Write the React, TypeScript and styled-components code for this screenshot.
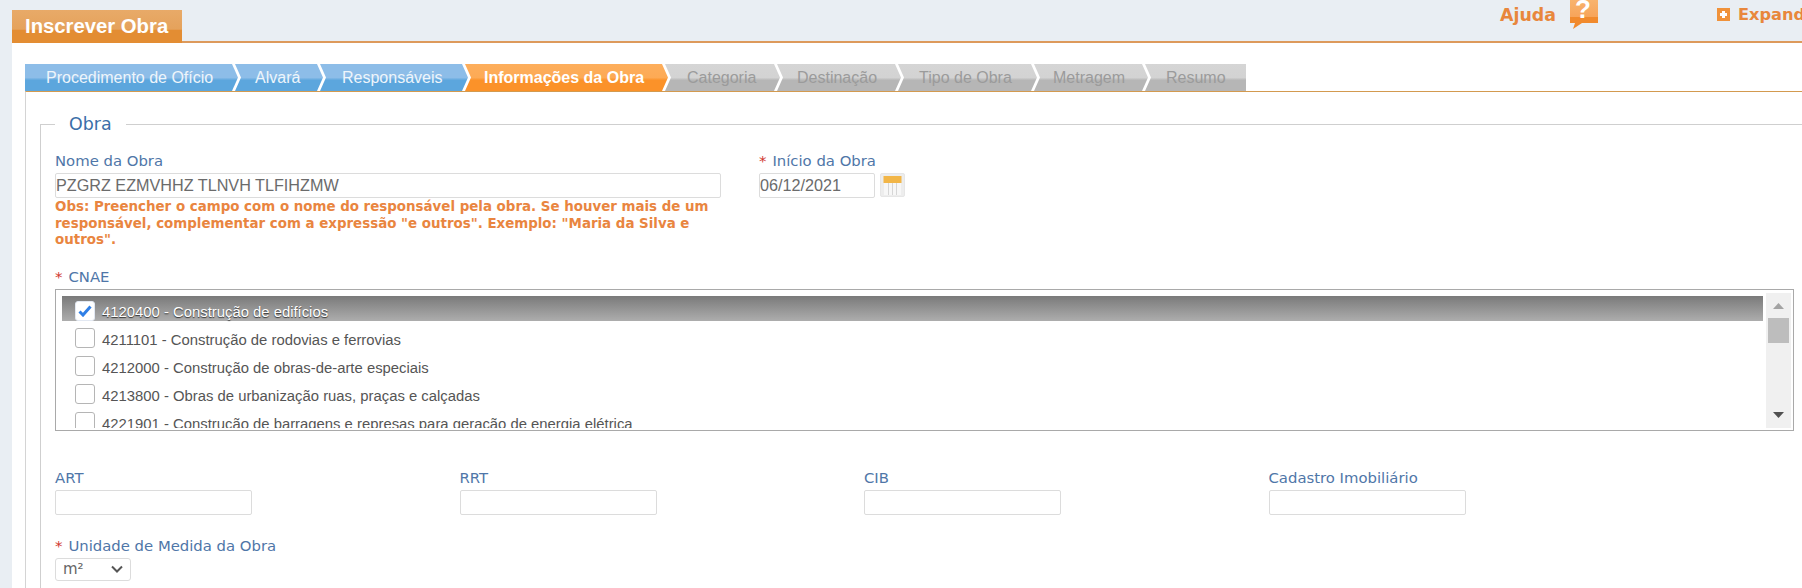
import React from 'react';
import styled, { createGlobalStyle } from 'styled-components';

const Global = createGlobalStyle`
  html, body { margin: 0; padding: 0; background: #e9eef3; }
  #root { width: 1802px; height: 588px; overflow: hidden; }
  * { box-sizing: border-box; }
`;

const Page = styled.div`
  width: 1802px;
  height: 588px;
  padding-left: 12px;
  overflow: hidden;
`;

const Header = styled.header`
  display: flex;
  align-items: flex-start;
  height: 43px;
  border-bottom: 2px solid #dd9a5c;
  white-space: nowrap;
`;

const TitleTab = styled.h1`
  flex: none;
  margin: 10px 0 -2px;
  width: 170px;
  height: 33px;
  padding: 4px 0 0 13px;
  font: bold 20.3px/24px "Liberation Sans", Arial, sans-serif;
  color: #fff;
  background: linear-gradient(#e8aa68 0%, #e5a25c 58%, #e38d33 62%, #e38d33 100%);
`;

const HelpLink = styled.a`
  flex: none;
  margin-left: 1318px;
  display: flex;
  align-items: flex-start;
  font: bold 17.4px/30px "DejaVu Sans", Verdana, sans-serif;
  color: #e8873c;
`;

const HelpIcon = styled.svg`
  margin-left: 14px;
  flex: none;
`;

const ExpandLink = styled.a`
  flex: none;
  margin-left: 119px;
  display: flex;
  align-items: flex-start;
  gap: 8px;
  font: bold 16.2px/30px "DejaVu Sans", Verdana, sans-serif;
  color: #e8873c;
`;

const ExpandIcon = styled.svg`
  margin-top: 8px;
  flex: none;
`;

const Main = styled.main`
  background: #fff;
  height: 545px;
  padding: 21px 0 0 13px;
  overflow: hidden;
`;

const Steps = styled.nav`
  display: flex;
  height: 27px;
`;

type Tone = 'done' | 'active' | 'off';

const toneBg: Record<Tone, string> = {
  done: 'linear-gradient(#8dbde8 0%, #8dbde8 50%, #5ca6dd 60%, #5ca6dd 100%)',
  active: 'linear-gradient(#fdae5c 0%, #fdaa55 50%, #fb9229 60%, #fb9229 100%)',
  off: 'linear-gradient(#d5d5d5 0%, #d3d3d3 50%, #b6b6b6 60%, #b6b6b6 100%)',
};

const toneText: Record<Tone, string> = { done: '#eef5fb', active: '#fff', off: '#9b9b9b' };

const Step = styled.div<{ $tone: Tone; $w: number; $pad: number; $first?: boolean; $last?: boolean }>`
  flex: none;
  width: ${p => p.$w}px;
  margin-right: ${p => (p.$last ? 0 : -3)}px;
  padding-left: ${p => p.$pad}px;
  background: ${p => toneBg[p.$tone]};
  color: ${p => toneText[p.$tone]};
  font: ${p => (p.$tone === 'active' ? 'bold' : 'normal')} 16px/27px "Liberation Sans", Arial, sans-serif;
  white-space: nowrap;
  clip-path: polygon(
    0 0,
    ${p => (p.$last ? '100% 0, 100% 100%' : 'calc(100% - 6px) 0, 100% 50%, calc(100% - 6px) 100%')},
    0 100%
    ${p => (p.$first ? '' : ', 6px 50%')}
  );
`;

const Panel = styled.section`
  border-top: 1px solid #d39a4f;
  border-left: 1px solid #d4d4d4;
  height: 497px;
  padding: 20px 0 0 14px;
`;

const Fieldset = styled.fieldset`
  margin: 0;
  width: 1800px;
  height: 480px;
  padding: 0 0 0 14px;
  border: none;
  border-top: 1px solid #cfcfcf;
  border-left: 1px solid #cfcfcf;
  min-width: 0;
`;

const Legend = styled.legend`
  padding: 0 14px;
  font: 17.4px/24px "DejaVu Sans", Verdana, sans-serif;
  color: #3b6ea8;
`;

const TopRow = styled.div`
  display: grid;
  grid-template-columns: 666px 200px;
  column-gap: 38px;
  margin-top: 15px;
`;

const Field = styled.div`
  display: flex;
  flex-direction: column;
  align-items: flex-start;
`;

const Label = styled.label`
  font: 14.85px/20px "DejaVu Sans", Verdana, sans-serif;
  color: #4f76a8;
  margin-bottom: 2px;
  white-space: nowrap;
`;

const Star = styled.span`
  color: #d0342c;
  margin-right: 6px;
`;

const TextInput = styled.input<{ $w: number }>`
  width: ${p => p.$w}px;
  height: 25px;
  padding: 0;
  border: 1px solid #dcdcdc;
  border-radius: 2px;
  background: #fff;
  color: #6b6b6b;
  font: 16.2px "Liberation Sans", Arial, sans-serif;
  outline: none;
`;

const Note = styled.p`
  margin: 1px 0 0;
  font: bold 13.4px/16.5px "DejaVu Sans", Verdana, sans-serif;
  color: #e98540;
`;

const DateLine = styled.div`
  display: flex;
  gap: 5px;
`;

const CalendarButton = styled.button`
  width: 25px;
  height: 24px;
  padding: 0;
  border: 1px solid #e6e6e6;
  border-radius: 2px;
  background: #ededed;
  display: flex;
  align-items: center;
  justify-content: center;
`;

const CnaeField = styled(Field)`
  margin-top: 18px;
`;

const ListBox = styled.div`
  display: flex;
  width: 1739px;
  height: 142px;
  padding: 3px 2px 2px 6px;
  border: 1px solid #a9a9a9;
`;

const Rows = styled.div`
  flex: 1;
  min-width: 0;
  margin: 3px 3px 0 0;
  overflow: hidden;
`;

const Row = styled.div<{ $on?: boolean }>`
  display: flex;
  align-items: flex-start;
  gap: 7px;
  height: 25px;
  margin-bottom: 3px;
  padding: 4px 0 0 13px;
  background: ${p => (p.$on ? 'linear-gradient(#7a7a7a, #adadad)' : 'transparent')};
  color: ${p => (p.$on ? '#fff' : '#555')};
  text-shadow: ${p => (p.$on ? '0 1px 1px #333' : 'none')};
  font: 14.85px/24px "Liberation Sans", Arial, sans-serif;
  white-space: nowrap;
`;

const Check = styled.span<{ $on?: boolean }>`
  flex: none;
  width: 20px;
  height: 20px;
  border: 1px solid ${p => (p.$on ? '#e2e8f2' : '#b5b5b5')};
  border-radius: 3px;
  background: #fff;
  display: flex;
  align-items: center;
  justify-content: center;
  margin-top: ${p => (p.$on ? 1 : 0)}px;
`;

const Scrollbar = styled.div`
  flex: none;
  width: 25px;
  background: #f0f0f0;
  display: flex;
  flex-direction: column;
  align-items: center;
`;

const ArrowUp = styled.svg`
  margin-top: 10px;
`;

const ArrowDown = styled.svg`
  margin-top: auto;
  margin-bottom: 10px;
`;

const Thumb = styled.div`
  width: 21px;
  height: 25px;
  margin-top: 9px;
  background: #bdbdbd;
`;

const CodesRow = styled.div`
  display: grid;
  grid-template-columns: repeat(4, 197px);
  column-gap: 207.5px;
  margin-top: 37px;
`;

const UnitField = styled(Field)`
  margin-top: 21px;
`;

const SelectBox = styled.div`
  width: 76px;
  height: 23px;
  padding: 0 7px;
  border: 1px solid #dcdcdc;
  border-radius: 3px;
  display: flex;
  align-items: center;
  justify-content: space-between;
  font: 15px "DejaVu Sans", Verdana, sans-serif;
  color: #666;
`;

const steps: { t: string; tone: Tone; w: number; pad: number }[] = [
  { t: 'Procedimento de Ofício', tone: 'done', w: 213, pad: 21 },
  { t: 'Alvará', tone: 'done', w: 88, pad: 20 },
  { t: 'Responsáveis', tone: 'done', w: 148, pad: 22 },
  { t: 'Informações da Obra', tone: 'active', w: 203, pad: 19 },
  { t: 'Categoria', tone: 'off', w: 115, pad: 22 },
  { t: 'Destinação', tone: 'off', w: 124, pad: 20 },
  { t: 'Tipo de Obra', tone: 'off', w: 139, pad: 21 },
  { t: 'Metragem', tone: 'off', w: 114, pad: 19 },
  { t: 'Resumo', tone: 'off', w: 101, pad: 21 },
];

const cnaes = [
  '4120400 - Construção de edifícios',
  '4211101 - Construção de rodovias e ferrovias',
  '4212000 - Construção de obras-de-arte especiais',
  '4213800 - Obras de urbanização ruas, praças e calçadas',
  '4221901 - Construção de barragens e represas para geração de energia elétrica',
];

const codes = ['ART', 'RRT', 'CIB', 'Cadastro Imobiliário'];

export default function App() {
  return (
    <Page>
      <Global />
      <Header>
        <TitleTab>Inscrever Obra</TitleTab>
        <HelpLink>
          Ajuda
          <HelpIcon width="28" height="30" viewBox="0 0 28 30">
            <defs>
              <linearGradient id="hg" x1="0" y1="0" x2="0" y2="1">
                <stop offset="0" stopColor="#f8b36e" />
                <stop offset="0.58" stopColor="#f7a45a" />
                <stop offset="0.6" stopColor="#f18a2d" />
                <stop offset="1" stopColor="#f18a2d" />
              </linearGradient>
            </defs>
            <path d="M0 0H28V23H12L3 29L5 23H0Z" fill="url(#hg)" />
            <text x="13" y="18" textAnchor="middle" fontFamily="Liberation Sans, sans-serif" fontWeight="bold" fontSize="26" fill="#fff">?</text>
          </HelpIcon>
        </HelpLink>
        <ExpandLink>
          <ExpandIcon width="13" height="13" viewBox="0 0 13 13">
            <rect width="13" height="13" fill="#f0923a" />
            <path d="M5 3H8V5H10V8H8V10H5V8H3V5H5Z" fill="#fff" />
          </ExpandIcon>
          Expandir
        </ExpandLink>
      </Header>
      <Main>
        <Steps>
          {steps.map((s, i) => (
            <Step key={s.t} $tone={s.tone} $w={s.w} $pad={s.pad} $first={i === 0} $last={i === steps.length - 1}>
              {s.t}
            </Step>
          ))}
        </Steps>
        <Panel>
          <Fieldset>
            <Legend>Obra</Legend>
            <TopRow>
              <Field>
                <Label>Nome da Obra</Label>
                <TextInput $w={666} defaultValue="PZGRZ EZMVHHZ TLNVH TLFIHZMW" />
                <Note>
                  Obs: Preencher o campo com o nome do responsável pela obra. Se houver mais de um responsável, complementar com a expressão "e outros". Exemplo: "Maria da Silva e outros".
                </Note>
              </Field>
              <Field>
                <Label><Star>*</Star>Início da Obra</Label>
                <DateLine>
                  <TextInput $w={116} defaultValue="06/12/2021" />
                  <CalendarButton aria-label="Calendário">
                    <svg width="19" height="21" viewBox="0 0 19 21">
                      <rect x="1" y="7" width="17" height="13" fill="#f7f7f7" />
                      <rect x="0.5" y="1" width="18" height="7" fill="#f2b648" />
                      <path d="M5.5 8V20M9.5 8V20M13.5 8V20" stroke="#d6d6d6" />
                    </svg>
                  </CalendarButton>
                </DateLine>
              </Field>
            </TopRow>
            <CnaeField>
              <Label><Star>*</Star>CNAE</Label>
              <ListBox>
                <Rows>
                  {cnaes.map((c, i) => (
                    <Row key={c} $on={i === 0}>
                      <Check $on={i === 0}>
                        {i === 0 && (
                          <svg width="14" height="12" viewBox="0 0 14 12">
                            <path d="M1.5 6.5L5 10L12.5 1.5" fill="none" stroke="#2f7fe6" strokeWidth="3" />
                          </svg>
                        )}
                      </Check>
                      {c}
                    </Row>
                  ))}
                </Rows>
                <Scrollbar>
                  <ArrowUp width="11" height="6" viewBox="0 0 11 6"><path d="M5.5 0L11 6H0Z" fill="#a3a3a3" /></ArrowUp>
                  <Thumb />
                  <ArrowDown width="11" height="6" viewBox="0 0 11 6"><path d="M0 0H11L5.5 6Z" fill="#505050" /></ArrowDown>
                </Scrollbar>
              </ListBox>
            </CnaeField>
            <CodesRow>
              {codes.map(c => (
                <Field key={c}>
                  <Label>{c}</Label>
                  <TextInput $w={197} />
                </Field>
              ))}
            </CodesRow>
            <UnitField>
              <Label><Star>*</Star>Unidade de Medida da Obra</Label>
              <SelectBox>
                m²
                <svg width="12" height="8" viewBox="0 0 12 8">
                  <path d="M1 1.5L6 6.5L11 1.5" fill="none" stroke="#555" strokeWidth="2" />
                </svg>
              </SelectBox>
            </UnitField>
          </Fieldset>
        </Panel>
      </Main>
    </Page>
  );
}
